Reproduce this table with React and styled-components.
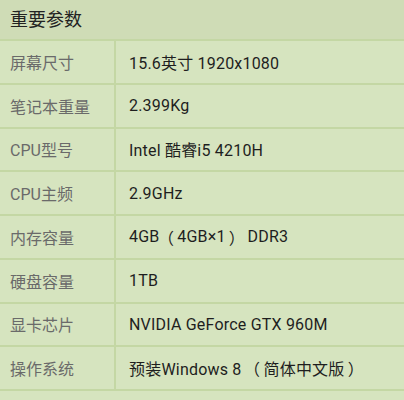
import React from "react";
import styled, { createGlobalStyle } from "styled-components";

const Global = createGlobalStyle`
  html, body { margin: 0; padding: 0; background: #d6e4bf; }
  body { font-family: Roboto, "Noto Sans CJK SC", sans-serif; }
`;

const Panel = styled.div`
  width: 404px;
  background: #d6e4bf;
`;

const Header = styled.div`
  box-sizing: border-box;
  height: 41px;
  padding: 0 10px 3px;
  display: flex;
  align-items: center;
  background: #cfdcb6;
  border-bottom: 2px solid #c4d7a4;
  font-size: 18px;
  color: #222;
`;

const Row = styled.div`
  box-sizing: border-box;
  height: 43.75px;
  display: grid;
  grid-template-columns: 114px 2px 1fr;
  border-bottom: 2px solid #c4d7a4;
`;

const Label = styled.div`
  display: flex;
  align-items: center;
  padding-left: 10px;
  font-size: 16px;
  color: #6a6a6a;
`;

const Divider = styled.div`
  background: #c4d7a4;
`;

const Value = styled.div`
  display: flex;
  align-items: center;
  padding-left: 13px;
  font-size: 16px;
  letter-spacing: 0.2px;
  color: #1e1e1e;
  white-space: pre;
`;

const Paren = styled.span`
  display: inline-block;
  margin-left: ${(p) => (p.$open ? "-0.1em" : "0.2em")};
  margin-right: ${(p) => (p.$open ? "0.2em" : "-0.1em")};
`;

function Text({ children }) {
  const parts = children.split(/([（）])/);
  return parts.map((s, i) =>
    s === "（" || s === "）" ? (
      <Paren key={i} $open={s === "（"}>{s}</Paren>
    ) : (
      <React.Fragment key={i}>{s}</React.Fragment>
    )
  );
}

const specs = [
  ["屏幕尺寸", "15.6英寸 1920x1080"],
  ["笔记本重量", "2.399Kg"],
  ["CPU型号", "Intel 酷睿i5 4210H"],
  ["CPU主频", "2.9GHz"],
  ["内存容量", "4GB（4GB×1） DDR3"],
  ["硬盘容量", "1TB"],
  ["显卡芯片", "NVIDIA GeForce GTX 960M"],
  ["操作系统", "预装Windows 8 （简体中文版）"],
];

export default function App() {
  return (
    <>
      <Global />
      <Panel>
        <Header>重要参数</Header>
        {specs.map(([k, v]) => (
          <Row key={k}>
            <Label>{k}</Label>
            <Divider />
            <Value>
              <Text>{v}</Text>
            </Value>
          </Row>
        ))}
      </Panel>
    </>
  );
}
